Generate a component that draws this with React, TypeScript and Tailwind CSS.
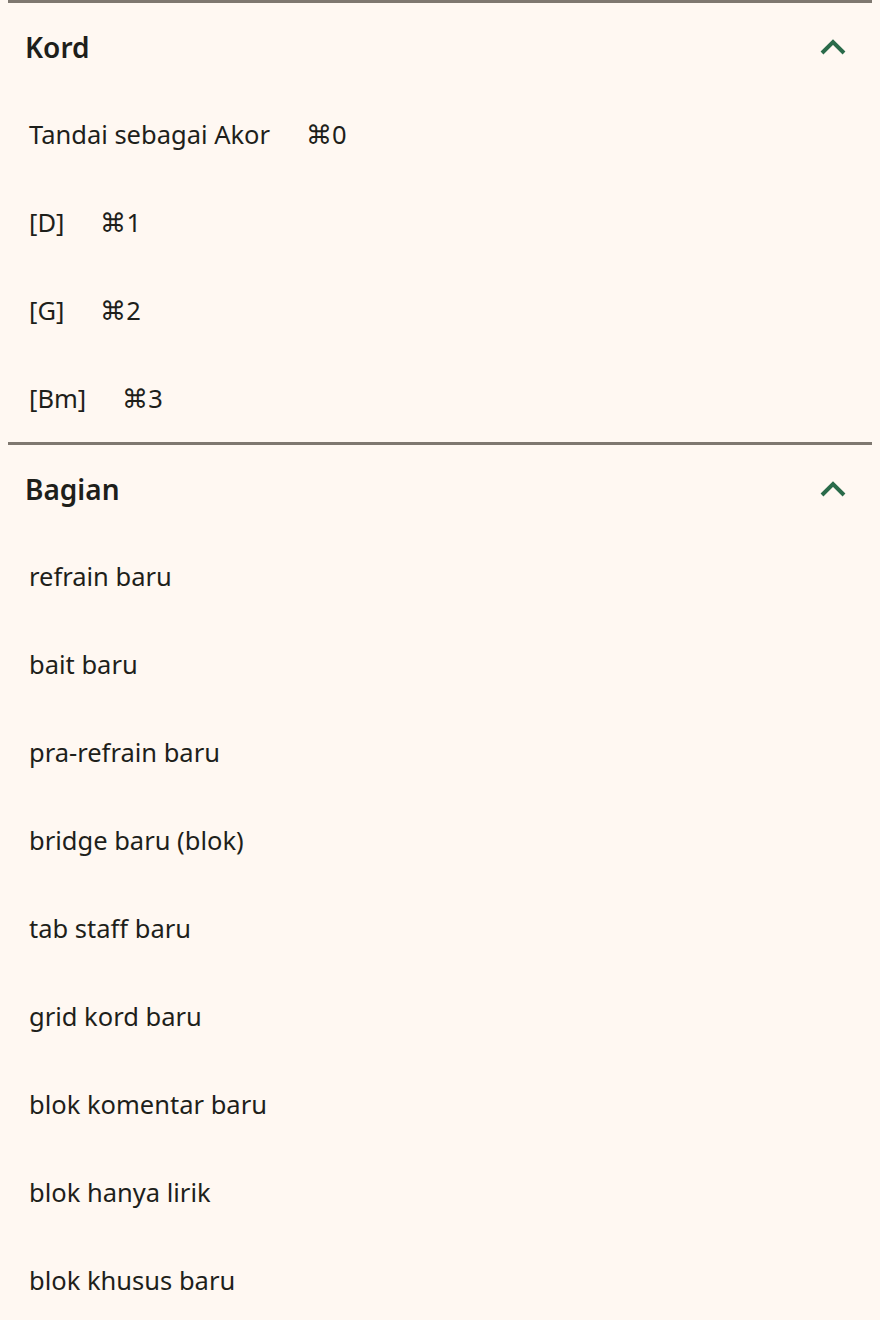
const kord = [
  { label: "Tandai sebagai Akor", key: "⌘0" },
  { label: "[D]", key: "⌘1" },
  { label: "[G]", key: "⌘2" },
  { label: "[Bm]", key: "⌘3" },
];

const bagian = [
  "refrain baru",
  "bait baru",
  "pra-refrain baru",
  "bridge baru (blok)",
  "tab staff baru",
  "grid kord baru",
  "blok komentar baru",
  "blok hanya lirik",
  "blok khusus baru",
];

function Chevron() {
  return (
    <svg width="28" height="18" viewBox="0 0 28 18" fill="none">
      <path d="M3 15 L14 4 L25 15" stroke="#2a6b4a" strokeWidth="4" />
    </svg>
  );
}

function Section({ title, children }: { title: string; children: React.ReactNode }) {
  return (
    <section className="mx-2 border-t-[3px] border-[#7f7870]">
      <div className="flex h-[87px] items-center justify-between pl-[17px] pr-[25px]">
        <h2 className="text-[28px] font-semibold text-[#1e1f1b]">{title}</h2>
        <Chevron />
      </div>
      <ul>{children}</ul>
    </section>
  );
}

export default function App() {
  return (
    <div
      className="min-h-[1320px] bg-[#fff8f2] text-[#1e1f1b]"
      style={{ fontFamily: '"Noto Sans", "Open Sans", sans-serif' }}
    >
      <Section title="Kord">
        {kord.map((k) => (
          <li key={k.key} className="flex h-[88px] items-center gap-9 pl-[21px] text-[25.5px]">
            <span>{k.label}</span>
            <span>{k.key}</span>
          </li>
        ))}
      </Section>
      <Section title="Bagian">
        {bagian.map((b) => (
          <li key={b} className="flex h-[88px] items-center pl-[21px] text-[25.5px]">
            {b}
          </li>
        ))}
      </Section>
    </div>
  );
}
